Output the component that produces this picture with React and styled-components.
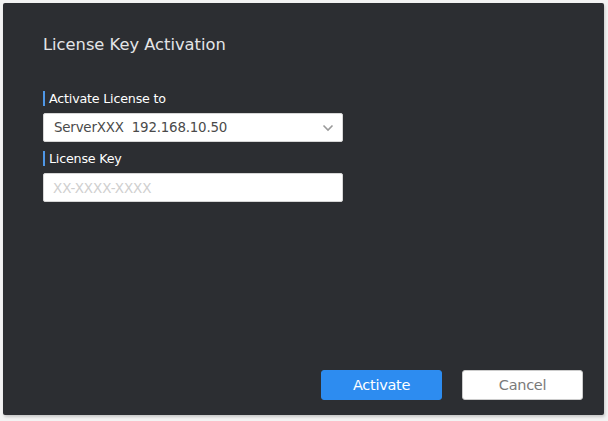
import React, {useState} from 'react';
import styled, {createGlobalStyle} from 'styled-components';

const GlobalStyle = createGlobalStyle`
    html, body {
        margin: 0;
        padding: 0;
        background: #f3f3f3;
        font-family: 'DejaVu Sans', sans-serif;
    }
`;

const Page = styled.div`
    width: 608px;
    height: 421px;
    padding: 3px 4px 6px 3px;
    box-sizing: border-box;
`;

const Dialog = styled.div`
    height: 100%;
    background: #2c2e32;
    border-radius: 2px;
    box-shadow: 1px 2px 3px rgba(0, 0, 0, 0.18);
    display: flex;
    flex-direction: column;
    padding: 32px 21px 15px 40px;
    box-sizing: border-box;
`;

const Title = styled.h2`
    margin: 0;
    font-size: 16.3px;
    font-weight: normal;
    color: #e4e5e7;
    line-height: 20px;
    letter-spacing: 0;
`;

const Form = styled.div`
    margin-top: 36px;
    width: 300px;
    display: flex;
    flex-direction: column;
`;

const Label = styled.label`
    display: flex;
    align-items: center;
    font-size: 12.7px;
    color: #ffffff;
    line-height: 15px;
    margin-bottom: 7px;
    letter-spacing: -0.2px;

    &::before {
        content: "";
        width: 2px;
        height: 15px;
        background: #4f97e6;
        margin-right: 4px;
    }
`;

const SelectBox = styled.div`
    position: relative;
    height: 29px;
    background: #fff;
    border: 1px solid #d6d6d6;
    border-radius: 2px;
    box-sizing: border-box;
    display: flex;
    align-items: center;
    padding: 0 10px;
    font-size: 13.4px;
    color: #4a4a4a;
    margin-bottom: 9px;
    letter-spacing: -0.2px;
`;

const Chevron = styled.svg`
    position: absolute;
    right: 8px;
    top: 10px;
`;

const Input = styled.input`
    height: 29px;
    background: #fff;
    border: 1px solid #d6d6d6;
    border-radius: 2px;
    box-sizing: border-box;
    padding: 0 9px;
    font-family: inherit;
    font-size: 13.5px;
    outline: none;
    letter-spacing: -0.1px;

    &::placeholder {
        color: #cfcfcf;
    }
`;

const Footer = styled.div`
    margin-top: auto;
    display: flex;
    justify-content: flex-end;
    gap: 20px;
`;

const Button = styled.button`
    width: 121px;
    height: 30px;
    border-radius: 3px;
    font-family: inherit;
    font-size: 14.5px;
    letter-spacing: -0.3px;
    cursor: pointer;
    border: 1px solid ${p => p.$primary ? '#2d8cf0' : '#cccccc'};
    background: ${p => p.$primary ? '#2d8cf0' : '#ffffff'};
    color: ${p => p.$primary ? '#ffffff' : '#7a7a7a'};
`;

export default function App() {
    const [key, setKey] = useState("");

    return (
        <Page>
            <GlobalStyle />
            <Dialog>
                <Title>License Key Activation</Title>
                <Form>
                    <Label>Activate License to</Label>
                    <SelectBox>
                        ServerXXX&nbsp;&nbsp;192.168.10.50
                        <Chevron width="12" height="8" viewBox="0 0 12 8">
                            <path d="M1.5 1.5 L6 6 L10.5 1.5" fill="none" stroke="#9a9a9a" strokeWidth="1.6" />
                        </Chevron>
                    </SelectBox>
                    <Label>License Key</Label>
                    <Input placeholder="XX-XXXX-XXXX" value={key} onChange={e => setKey(e.target.value)} />
                </Form>
                <Footer>
                    <Button $primary>Activate</Button>
                    <Button>Cancel</Button>
                </Footer>
            </Dialog>
        </Page>
    );
}
